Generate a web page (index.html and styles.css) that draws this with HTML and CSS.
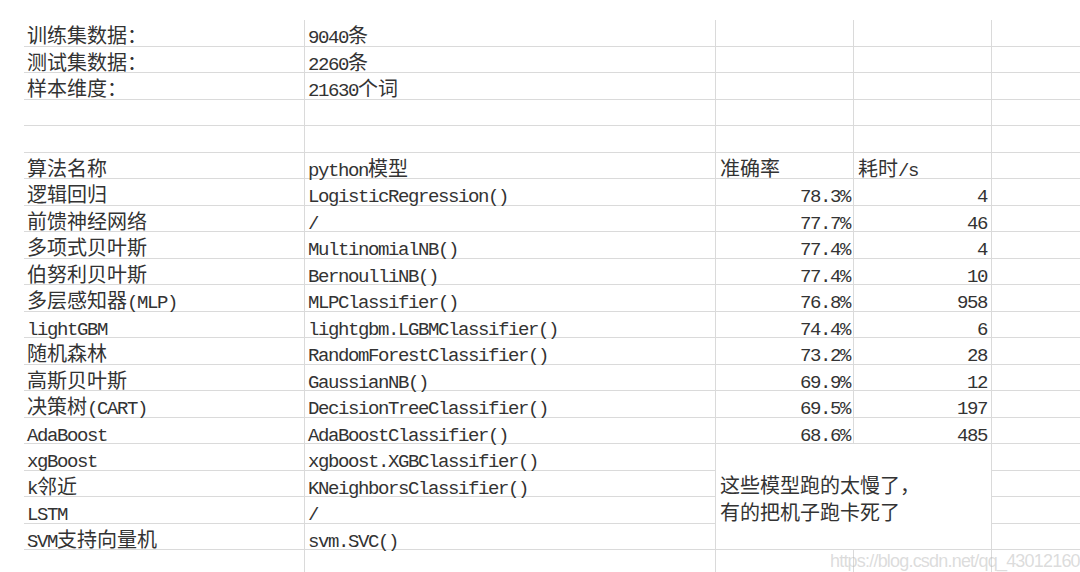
FILE: index.html
```html
<!DOCTYPE html>
<html lang="zh-CN">
<head>
<meta charset="utf-8">
<title>模型对比</title>
<link rel="stylesheet" href="styles.css">
</head>
<body>
<div class="page">
  <div class="sheet">
    <div class="c">训练集数据：</div><div class="c"><span class="en">9040</span>条</div><div class="c"></div><div class="c"></div><div class="c"></div>
    <div class="c">测试集数据：</div><div class="c"><span class="en">2260</span>条</div><div class="c"></div><div class="c"></div><div class="c"></div>
    <div class="c">样本维度：</div><div class="c"><span class="en">21630</span>个词</div><div class="c"></div><div class="c"></div><div class="c"></div>
    <div class="c"></div><div class="c"></div><div class="c"></div><div class="c"></div><div class="c"></div>
    <div class="c"></div><div class="c"></div><div class="c"></div><div class="c"></div><div class="c"></div>
    <div class="c">算法名称</div><div class="c"><span class="en">python</span>模型</div><div class="c hd">准确率</div><div class="c hd">耗时<span class="en">/s</span></div><div class="c"></div>
    <div class="c">逻辑回归</div><div class="c"><span class="en">LogisticRegression()</span></div><div class="c r"><span class="en">78.3%</span></div><div class="c r d"><span class="en">4</span></div><div class="c"></div>
    <div class="c">前馈神经网络</div><div class="c"><span class="en">/</span></div><div class="c r"><span class="en">77.7%</span></div><div class="c r d"><span class="en">46</span></div><div class="c"></div>
    <div class="c">多项式贝叶斯</div><div class="c"><span class="en">MultinomialNB()</span></div><div class="c r"><span class="en">77.4%</span></div><div class="c r d"><span class="en">4</span></div><div class="c"></div>
    <div class="c">伯努利贝叶斯</div><div class="c"><span class="en">BernoulliNB()</span></div><div class="c r"><span class="en">77.4%</span></div><div class="c r d"><span class="en">10</span></div><div class="c"></div>
    <div class="c">多层感知器<span class="en">(MLP)</span></div><div class="c"><span class="en">MLPClassifier()</span></div><div class="c r"><span class="en">76.8%</span></div><div class="c r d"><span class="en">958</span></div><div class="c"></div>
    <div class="c"><span class="en">lightGBM</span></div><div class="c"><span class="en">lightgbm.LGBMClassifier()</span></div><div class="c r"><span class="en">74.4%</span></div><div class="c r d"><span class="en">6</span></div><div class="c"></div>
    <div class="c">随机森林</div><div class="c"><span class="en">RandomForestClassifier()</span></div><div class="c r"><span class="en">73.2%</span></div><div class="c r d"><span class="en">28</span></div><div class="c"></div>
    <div class="c">高斯贝叶斯</div><div class="c"><span class="en">GaussianNB()</span></div><div class="c r"><span class="en">69.9%</span></div><div class="c r d"><span class="en">12</span></div><div class="c"></div>
    <div class="c">决策树<span class="en">(CART)</span></div><div class="c"><span class="en">DecisionTreeClassifier()</span></div><div class="c r"><span class="en">69.5%</span></div><div class="c r d"><span class="en">197</span></div><div class="c"></div>
    <div class="c"><span class="en">AdaBoost</span></div><div class="c"><span class="en">AdaBoostClassifier()</span></div><div class="c r"><span class="en">68.6%</span></div><div class="c r d"><span class="en">485</span></div><div class="c"></div>
    <div class="c merge">这些模型跑的太慢了，<br>有的把机子跑卡死了</div>
    <div class="c"><span class="en">xgBoost</span></div><div class="c"><span class="en">xgboost.XGBClassifier()</span></div><div class="c"></div>
    <div class="c"><span class="en">k</span>邻近</div><div class="c"><span class="en">KNeighborsClassifier()</span></div><div class="c"></div>
    <div class="c"><span class="en">LSTM</span></div><div class="c"><span class="en">/</span></div><div class="c"></div>
    <div class="c"><span class="en">SVM</span>支持向量机</div><div class="c"><span class="en">svm.SVC()</span></div><div class="c"></div>
    <div class="c"></div><div class="c"></div><div class="c"></div><div class="c"></div><div class="c"></div>
  </div>
  <div class="watermark">https://blog.csdn.net/qq_43012160</div>
</div>
</body>
</html>
```
FILE: styles.css
```css
html, body {
  margin: 0;
  padding: 0;
  background: #ffffff;
  overflow: hidden;
}

.page {
  position: relative;
  width: 1080px;
  height: 572px;
  padding: 20px 0 0 24px;
  box-sizing: border-box;
  overflow: hidden;
}

.sheet {
  display: grid;
  grid-template-columns: 281px 411px 138px 138px 120px;
  grid-auto-rows: 26.5px;
}

.c {
  box-sizing: border-box;
  border-bottom: 1px solid #dadada;
  border-right: 1px solid #dadada;
  padding: 5px 3px 0 3px;
  font-family: "Noto Sans CJK SC", sans-serif;
  font-size: 20px;
  line-height: 20px;
  color: #333333;
  white-space: nowrap;
  overflow: visible;
}

.hd {
  padding-left: 4px;
}

.r {
  text-align: right;
  padding-right: 3px;
}

.d {
  padding-right: 4px;
}

.en {
  font-family: "Liberation Mono", monospace;
  font-size: 19px;
  letter-spacing: -1.4px;
}

.merge {
  grid-column: 3 / 5;
  grid-row: 17 / 21;
  display: flex;
  align-items: center;
  padding: 4px 4px 0 4px;
  line-height: 26.5px;
  white-space: nowrap;
}

.watermark {
  position: absolute;
  left: 830px;
  top: 552px;
  font-family: "Liberation Sans", Arial, sans-serif;
  font-size: 18px;
  line-height: 18px;
  letter-spacing: -0.8px;
  color: rgba(185, 185, 185, 0.5);
  white-space: nowrap;
}
```
